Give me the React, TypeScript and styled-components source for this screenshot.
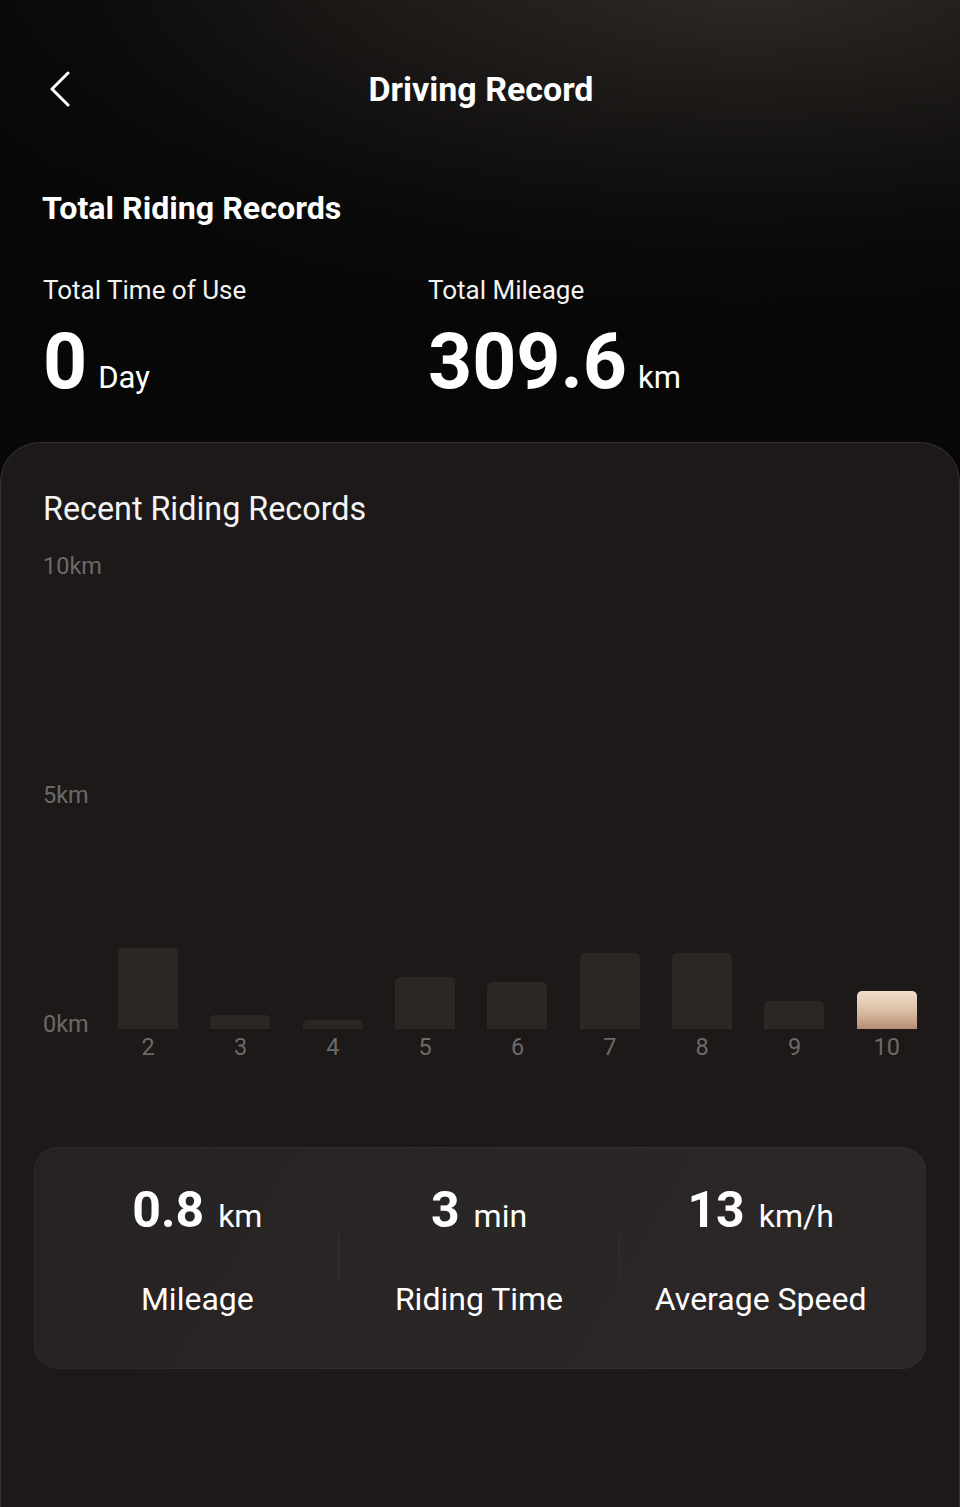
import React from "react";
import styled, { createGlobalStyle } from "styled-components";

const Global = createGlobalStyle`
  html, body { margin: 0; padding: 0; background: #070707; }
  body { font-family: Roboto, "Noto Sans", "Liberation Sans", sans-serif; color: #fff; }
  * { box-sizing: border-box; }
`;

const Page = styled.div`
  width: 960px;
  min-height: 1507px;
  display: flex;
  flex-direction: column;
  background: #070707;
`;

const Top = styled.section`
  height: 442px;
  padding-top: 40px;
  background:
    linear-gradient(to bottom, rgba(7, 7, 7, 0) 0%, rgba(7, 7, 7, 0.55) 55%, #070707 100%),
    radial-gradient(ellipse 85% 75% at 78% 0%, #2c2825 0%, #1d1a18 45%, #0d0c0b 80%, #080808 100%);
`;

const Header = styled.header`
  height: 98px;
  display: flex;
  align-items: center;
  justify-content: center;
  position: relative;
`;

const BackButton = styled.button`
  position: absolute;
  left: 44px;
  top: 50%;
  transform: translateY(-50%);
  width: 34px;
  height: 44px;
  padding: 0;
  border: none;
  background: none;
  display: flex;
  align-items: center;
  justify-content: center;
  cursor: pointer;
`;

const Title = styled.h1`
  margin: 0 0 0 2px;
  font-size: 34px;
  line-height: 40px;
  font-weight: 700;
  color: #fff;
`;

const SectionTitle = styled.h2`
  margin: 52px 0 0 42px;
  font-size: 32.2px;
  line-height: 36px;
  font-weight: 700;
  color: #fff;
`;

const TotalsRow = styled.div`
  display: grid;
  grid-template-columns: 385px 1fr;
  padding-left: 43px;
  margin-top: 49px;
`;

const TotalItem = styled.div`
  display: flex;
  flex-direction: column;
`;

const TotalLabel = styled.div`
  font-size: 26px;
  line-height: 30px;
  color: #f2f2f2;
`;

const TotalValueLine = styled.div`
  margin-top: 17px;
  display: flex;
  align-items: baseline;
  gap: 11px;
`;

const BigNumber = styled.span`
  font-size: 77px;
  line-height: 80px;
  font-weight: 700;
  color: #fff;
`;

const BigUnit = styled.span`
  font-size: 31px;
  color: #fff;
`;

const Card = styled.section`
  flex: 1;
  background: #1c1918;
  border: 1px solid #35302d;
  border-bottom: none;
  border-radius: 40px 40px 0 0;
  padding: 48px 0 0 0;
`;

const CardTitle = styled.h3`
  margin: 0 0 0 42px;
  font-size: 32.3px;
  line-height: 36px;
  font-weight: 400;
  color: #f4f4f4;
`;

const Chart = styled.div`
  margin-top: 26px;
  padding-left: 42px;
  display: flex;
  align-items: flex-start;
`;

const YAxis = styled.div`
  width: 59px;
  height: 484px;
  display: flex;
  flex-direction: column;
  justify-content: space-between;
`;

const AxisLabel = styled.span`
  font-size: 23.5px;
  line-height: 26px;
  color: #6d6967;
`;

const Plot = styled.div`
  width: 831px;
  height: 507px;
  display: grid;
  grid-template-columns: repeat(9, 1fr);
`;

const Column = styled.div`
  display: flex;
  flex-direction: column;
  align-items: center;
  justify-content: flex-end;
`;

const Bar = styled.div<{ $active?: boolean }>`
  width: 60px;
  border-radius: 5px 5px 0 0;
  background: ${(p) =>
    p.$active ? "linear-gradient(to bottom, #f0dfcc 0%, #d8bca3 55%, #b58e73 100%)" : "#2b2725"};
`;

const XLabel = styled.span`
  margin-top: 5px;
  font-size: 23.5px;
  line-height: 26px;
  color: #6d6967;
`;

const StatsBox = styled.div`
  margin: 87px 33px 0 33px;
  height: 222px;
  border-radius: 24px;
  background: linear-gradient(120deg, #262221 0%, #2a2625 50%, #2b2726 100%);
  border: 1px solid rgba(255, 255, 255, 0.035);
  padding: 32px 24px 0 22px;
  display: grid;
  grid-template-columns: 1fr 1px 1fr 1px 1fr;
  align-items: start;
`;

const Stat = styled.div`
  display: flex;
  flex-direction: column;
  align-items: center;
`;

const StatValueLine = styled.div`
  display: flex;
  align-items: baseline;
  gap: 14px;
  height: 60px;
`;

const StatNumber = styled.span`
  font-size: 50px;
  line-height: 60px;
  font-weight: 700;
  color: #fff;
`;

const StatUnit = styled.span`
  font-size: 32px;
  color: #fff;
`;

const StatLabel = styled.span`
  margin-top: 39px;
  font-size: 32px;
  line-height: 40px;
  color: #fff;
`;

const Divider = styled.div`
  width: 1px;
  height: 46px;
  margin-top: 53px;
  background: #36322f;
`;

const bars = [
  { day: "2", km: 1.77 },
  { day: "3", km: 0.3 },
  { day: "4", km: 0.2 },
  { day: "5", km: 1.13 },
  { day: "6", km: 1.03 },
  { day: "7", km: 1.66 },
  { day: "8", km: 1.66 },
  { day: "9", km: 0.61 },
  { day: "10", km: 0.83 },
];

const PX_PER_KM = 45.8;

const stats = [
  { value: "0.8", unit: "km", label: "Mileage" },
  { value: "3", unit: "min", label: "Riding Time" },
  { value: "13", unit: "km/h", label: "Average Speed" },
];

export default function App() {
  return (
    <>
      <Global />
      <Page>
        <Top>
          <Header>
            <BackButton aria-label="Back">
              <svg width="24" height="36" viewBox="0 0 24 36" fill="none">
                <path d="M19 2 L3 18 L19 34" stroke="#fff" strokeWidth="3" strokeLinecap="round" strokeLinejoin="round" />
              </svg>
            </BackButton>
            <Title>Driving Record</Title>
          </Header>
          <SectionTitle>Total Riding Records</SectionTitle>
          <TotalsRow>
            <TotalItem>
              <TotalLabel>Total Time of Use</TotalLabel>
              <TotalValueLine>
                <BigNumber>0</BigNumber>
                <BigUnit>Day</BigUnit>
              </TotalValueLine>
            </TotalItem>
            <TotalItem>
              <TotalLabel>Total Mileage</TotalLabel>
              <TotalValueLine>
                <BigNumber>309.6</BigNumber>
                <BigUnit>km</BigUnit>
              </TotalValueLine>
            </TotalItem>
          </TotalsRow>
        </Top>
        <Card>
          <CardTitle>Recent Riding Records</CardTitle>
          <Chart>
            <YAxis>
              <AxisLabel>10km</AxisLabel>
              <AxisLabel>5km</AxisLabel>
              <AxisLabel>0km</AxisLabel>
            </YAxis>
            <Plot>
              {bars.map((b, i) => (
                <Column key={b.day}>
                  <Bar $active={i === bars.length - 1} style={{ height: `${Math.round(b.km * PX_PER_KM)}px` }} />
                  <XLabel>{b.day}</XLabel>
                </Column>
              ))}
            </Plot>
          </Chart>
          <StatsBox>
            {stats.map((s, i) => (
              <React.Fragment key={s.label}>
                {i > 0 && <Divider />}
                <Stat>
                  <StatValueLine>
                    <StatNumber>{s.value}</StatNumber>
                    <StatUnit>{s.unit}</StatUnit>
                  </StatValueLine>
                  <StatLabel>{s.label}</StatLabel>
                </Stat>
              </React.Fragment>
            ))}
          </StatsBox>
        </Card>
      </Page>
    </>
  );
}
